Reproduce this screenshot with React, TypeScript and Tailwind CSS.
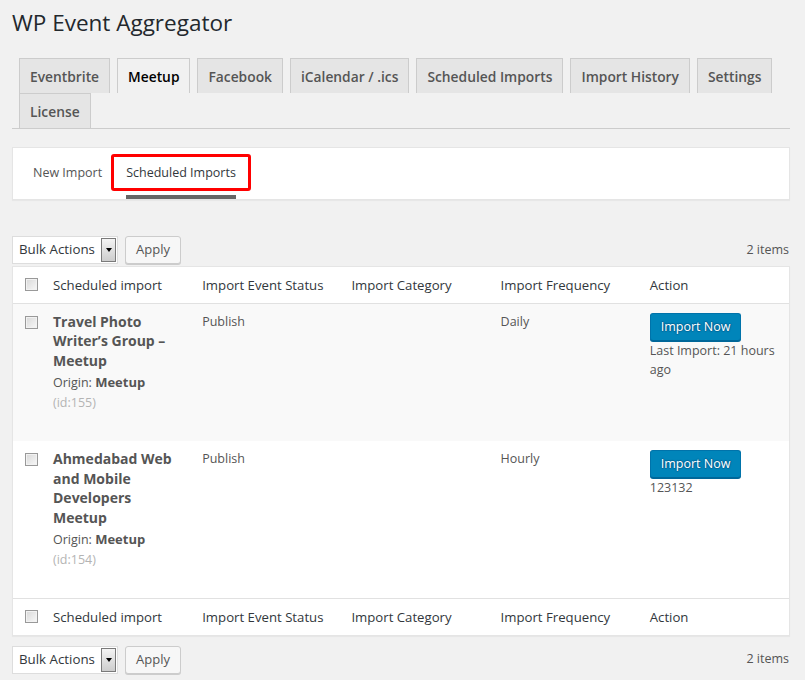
import React from "react";

const TABS = [
  "Eventbrite",
  "Meetup",
  "Facebook",
  "iCalendar / .ics",
  "Scheduled Imports",
  "Import History",
  "Settings",
  "License",
];

const COLUMNS = [
  "Scheduled import",
  "Import Event Status",
  "Import Category",
  "Import Frequency",
  "Action",
];

type Row = {
  title: string;
  origin: string;
  id: number;
  status: string;
  frequency: string;
  note: string;
};

const ROWS: Row[] = [
  {
    title: "Travel Photo Writer\u2019s Group \u2013 Meetup",
    origin: "Meetup",
    id: 155,
    status: "Publish",
    frequency: "Daily",
    note: "Last Import: 21 hours ago",
  },
  {
    title: "Ahmedabad Web and Mobile Developers Meetup",
    origin: "Meetup",
    id: 154,
    status: "Publish",
    frequency: "Hourly",
    note: "123132",
  },
];

const Checkbox = () => (
  <span className="block h-[13px] w-[13px] border border-[#999] bg-linear-to-br from-[#d8d8d8] to-[#f8f8f8] shadow-[inset_0_0_0_1px_#f2f2f2]" />
);

const TableNav = () => (
  <div className="flex h-[28px] items-center justify-between">
    <div className="flex items-center gap-[7px]">
      <div className="flex h-[28px] w-[106px] items-center justify-between border border-[#ddd] bg-white pl-[6px] pr-[1px]">
        <span className="text-[13.3px] text-[#32373c]">Bulk Actions</span>
        <span className="flex h-[24px] w-[15px] items-center justify-center border border-[#7a7a7a] bg-linear-to-b from-[#f4f4f4] to-[#cdcdcd]">
          <span className="h-0 w-0 border-x-[3.5px] border-t-[4px] border-x-transparent border-t-black" />
        </span>
      </div>
      <button className="h-[28px] rounded-[3px] border border-[#ccc] bg-[#f7f7f7] px-[10px] text-[13px] text-[#555] shadow-[0_1px_0_#ccc]">
        Apply
      </button>
    </div>
    <span className="pr-[1px] text-[12.5px] text-[#555]">2 items</span>
  </div>
);

const HeadRow = ({ foot }: { foot?: boolean }) => (
  <tr className={foot ? "border-t border-[#e1e1e1]" : "border-b border-[#e1e1e1]"}>
    <td className="h-[36px] pl-[12px] align-middle">
      <Checkbox />
    </td>
    {COLUMNS.map((c) => (
      <th
        key={c}
        className="h-[36px] px-[10px] pt-[1px] text-left align-middle text-[13.2px] font-normal leading-[19.5px] text-[#32373c]"
      >
        {c}
      </th>
    ))}
  </tr>
);

export default function App() {
  return (
    <div className="min-h-screen bg-[#f1f1f1] pl-[12px] pr-[15px] pb-[8px] font-['Open_Sans',sans-serif] text-[#444]">
      <h1 className="pt-[8px] text-[22.5px] font-normal leading-[29px] text-[#23282d]">
        WP Event Aggregator
      </h1>

      <div className="mt-[12px] flex flex-wrap border-b border-[#ccc] pt-[9px]">
        {TABS.map((t) => (
          <a
            key={t}
            className={
              t === "Meetup"
                ? "ml-[7px] h-[35px] border border-b-0 border-[#ccc] bg-[#f1f1f1] px-[10px] pt-[2px] text-[13.8px] font-semibold leading-[32px] text-black"
                : "ml-[7px] h-[35px] border border-b-0 border-[#ccc] bg-[#e5e5e5] px-[10px] pt-[2px] text-[13.8px] font-semibold leading-[32px] text-[#555]"
            }
          >
            {t}
          </a>
        ))}
      </div>

      <div className="mt-[18px] flex h-[53px] border border-[#e5e5e5] bg-white pl-[20px] shadow-[0_1px_1px_rgba(0,0,0,0.04)]">
        <a className="flex items-center text-[12.5px] text-[#555]">New Import</a>
        <a className="relative ml-[24px] flex items-center text-[12.5px] text-[#32373c]">
          Scheduled Imports
          <span className="absolute bottom-0 left-0 right-0 h-[4px] bg-[#666]" />
          <span className="absolute -left-[15px] -right-[15px] top-[6px] bottom-[8px] rounded-[3px] border-[3px] border-[#ff0000]" />
        </a>
      </div>

      <div className="mt-[36px]">
        <TableNav />
      </div>

      <div className="mt-[2px] border border-[#e5e5e5] bg-white shadow-[0_1px_1px_rgba(0,0,0,0.04)]">
        <table className="w-full table-fixed border-collapse">
          <colgroup>
            <col className="w-[30px]" />
            <col />
            <col />
            <col />
            <col />
            <col />
          </colgroup>
          <thead>
            <HeadRow />
          </thead>
          <tbody className="text-[12.5px] leading-[19.5px] text-[#555]">
            {ROWS.map((r, i) => (
              <tr key={r.id} className={i % 2 === 0 ? "bg-[#f9f9f9]" : "bg-white"}>
                <td className="pl-[12px] pt-[12px] align-top">
                  <Checkbox />
                </td>
                <td className="px-[10px] pt-[8px] pb-[29px] align-top">
                  <div className="text-[14px] font-bold leading-[19.5px] text-[#555]">
                    {r.title}
                  </div>
                  <div className="mt-[3px]">
                    Origin: <b className="text-[13px]">{r.origin}</b>
                  </div>
                  <div className="text-[#b4b4b4]">(id:{r.id})</div>
                </td>
                <td className="px-[10px] pt-[8px] align-top">{r.status}</td>
                <td className="px-[10px] pt-[8px] align-top" />
                <td className="px-[10px] pt-[8px] align-top">{r.frequency}</td>
                <td className="px-[10px] pt-[8px] align-top">
                  <button className="mt-[1px] block h-[28px] rounded-[3px] border border-[#0073aa] border-b-[#006799] bg-[#0085ba] px-[10px] text-[12.5px] text-white shadow-[0_1px_0_#006799] [text-shadow:0_-1px_1px_#006799,1px_0_1px_#006799,0_1px_1px_#006799,-1px_0_1px_#006799]">
                    Import Now
                  </button>
                  <div>{r.note}</div>
                </td>
              </tr>
            ))}
          </tbody>
          <tfoot>
            <HeadRow foot />
          </tfoot>
        </table>
      </div>

      <div className="mt-[10px]">
        <TableNav />
      </div>
    </div>
  );
}
